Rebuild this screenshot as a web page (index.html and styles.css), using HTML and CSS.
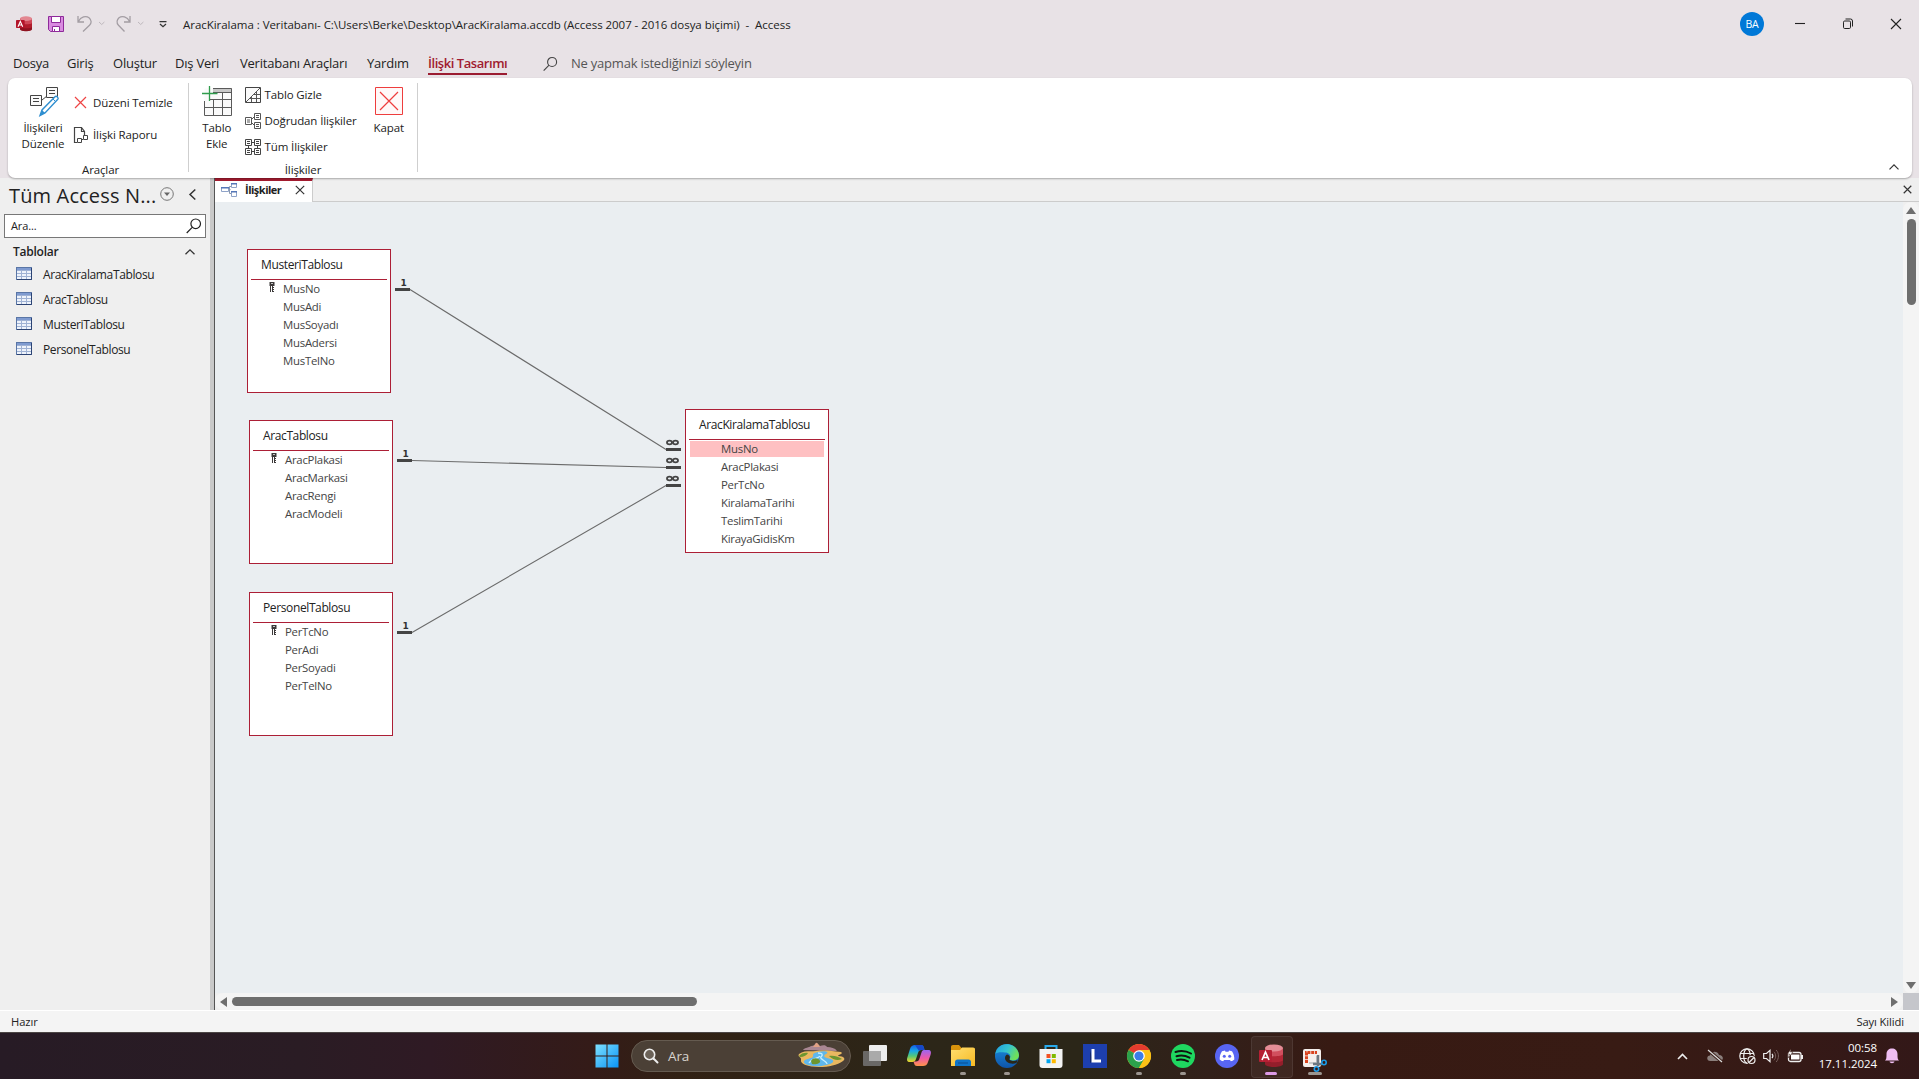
FILE: index.html
```html
<!DOCTYPE html>
<html lang="tr">
<head>
<meta charset="utf-8">
<title>AracKiralama - Access</title>
<link rel="stylesheet" href="styles.css">
</head>
<body>
<svg class="defs" width="0" height="0">
  <defs>
    <linearGradient id="win" x1="0" y1="0" x2="1" y2="1"><stop offset="0" stop-color="#7de0ff"/><stop offset="1" stop-color="#0a93f5"/></linearGradient>
    <linearGradient id="edgeA" x1="0" y1="0" x2="1" y2=".4"><stop offset="0" stop-color="#1f9fe0"/><stop offset=".55" stop-color="#35c3d0"/><stop offset="1" stop-color="#6fe05a"/></linearGradient>
    <linearGradient id="edgeB" x1="0" y1="0" x2="0" y2="1"><stop offset="0" stop-color="#1b8fe0"/><stop offset="1" stop-color="#0f55a8"/></linearGradient>
    <linearGradient id="copA" x1="0" y1="0" x2="0" y2="1"><stop offset="0" stop-color="#1560e8"/><stop offset=".35" stop-color="#18a8e8"/><stop offset=".65" stop-color="#52c878"/><stop offset="1" stop-color="#f3d428"/></linearGradient>
    <linearGradient id="copB" x1="0" y1="0" x2="0" y2="1"><stop offset="0" stop-color="#9a66f0"/><stop offset=".5" stop-color="#ee58a8"/><stop offset="1" stop-color="#ff9448"/></linearGradient>
    <linearGradient id="fold" x1="0" y1="0" x2="1" y2="1"><stop offset="0" stop-color="#ffdf70"/><stop offset="1" stop-color="#f7b923"/></linearGradient>
    <symbol id="grid" viewBox="0 0 16 13">
      <rect x=".5" y=".5" width="15" height="12" fill="#eef3fb" stroke="#5a76a6"/>
      <rect x="1" y="1" width="14" height="2" fill="#7f9bd0"/>
      <path d="M1 3.5h14M1 6.500h14M1 9.500h14M5.500 3v9M10.500 3v9" stroke="#9fb2d4" fill="none"/>
      <path d="M15.500 1v11.500H1" stroke="#2c4474" fill="none"/>
    </symbol>
    <symbol id="key" viewBox="0 0 6 11">
      <path d="M.5 0h5v4H4v1h1v1H4v1h1v1H4v1h1v1H3V4H2v6H1V4H.5zM2.300 1v1h1.400V1z" fill="#3d3a3a" fill-rule="evenodd"/>
    </symbol>
    <symbol id="access" viewBox="0 0 24 24">
      <path d="M6 4v16c0 4 18 4 18 0V4z" fill="#8f1220"/>
      <path d="M6 4v12c0 3 18 3 18 0V4z" fill="#b01c2c"/>
      <path d="M6 4v6c0 3 18 3 18 0V4z" fill="#cf4656"/>
      <ellipse cx="15" cy="4" rx="9" ry="3.500" fill="#e38791"/>
      <rect x="0" y="6" width="13" height="12" rx="1" fill="#b3152a"/>
      <path d="M3 16 6.500 8l3.500 8M4.300 13.500h4.400" stroke="#fff" stroke-width="1.700" fill="none"/>
    </symbol>
    <symbol id="lens" viewBox="0 0 16 16"><path d="M14.500 5.800a4.800 4.800 0 1 1-9.600 0 4.800 4.800 0 0 1 9.600 0zM6.200 9.400.7 15" fill="none" stroke="currentColor" stroke-width="1.200"/></symbol>
  </defs>
</svg>

<header class="titlebar">
  <svg class="tb-app" width="16" height="16"><use href="#access"/></svg>
  <svg class="tb-save" width="16" height="16" viewBox="0 0 16 16"><path d="M.5.5h15v15h-13l-2-2z" fill="#d98be0" stroke="#8e2a9a"/><path d="M3.500.500h9v6h-9zM4.500 10.500h7v5h-7z" fill="#fff" stroke="#8e2a9a"/><path d="M6.500 13v2" stroke="#8e2a9a"/></svg>
  <svg class="tb-undo" width="28" height="18" viewBox="0 0 28 18"><path d="M1 1v6h6M1.200 6.800C4 1.500 9 .500 12 2.800c3 2.500 2.500 5.500.500 7.500L6 16.500" fill="none" stroke="#a39da3" stroke-width="1.300"/><path d="m22 7 2.700 2.500L27.400 7" fill="none" stroke="#beb8bd"/></svg>
  <svg class="tb-redo" width="28" height="18" viewBox="0 0 28 18"><path d="M14 1v6H8M13.800 6.800C11 1.500 6 .500 3 2.800.500 5.300.500 8 2.500 10.300L8.500 16.500" fill="none" stroke="#a39da3" stroke-width="1.300"/><path d="m22 7 2.700 2.500L27.400 7" fill="none" stroke="#beb8bd"/></svg>
  <svg class="tb-more" width="8" height="7" viewBox="0 0 8 7"><path d="M.5.600h7M1 3l3 2.800L7 3" fill="none" stroke="#333" stroke-width="1.200"/></svg>
  <h1 class="tb-title">AracKiralama : Veritabanı- C:\Users\Berke\Desktop\AracKiralama.accdb (Access 2007 - 2016 dosya biçimi)&nbsp; -&nbsp; Access</h1>
  <div class="avatar">BA</div>
  <div class="win-buttons">
    <svg width="48" height="30" viewBox="0 0 48 30"><path d="M19 14.500h10" stroke="#222" stroke-width="1.100"/></svg>
    <svg width="48" height="30" viewBox="0 0 48 30"><rect x="19.500" y="12" width="7" height="7.500" rx="1.200" fill="none" stroke="#222"/><path d="M21.500 10h5a2 2 0 0 1 2 2v5.500" fill="none" stroke="#222"/></svg>
    <svg width="48" height="30" viewBox="0 0 48 30"><path d="m19 10 10 10M29 10 19 20" stroke="#222" stroke-width="1.100"/></svg>
  </div>
</header>

<nav class="menu">
  <span>Dosya</span><span>Giriş</span><span>Oluştur</span><span>Dış Veri</span><span>Veritabanı Araçları</span><span>Yardım</span>
  <span><b class="menu-active">İlişki Tasarımı</b></span>
  <span class="menu-lens"><svg width="15" height="16"><use href="#lens"/></svg></span>
  <span class="menu-ask">Ne yapmak istediğinizi söyleyin</span>
</nav>

<section class="ribbon">
  <div class="group tools">
    <div class="group-body">
      <div class="big">
        <svg width="32" height="32" viewBox="0 0 32 32"><path d="M1.500 10.500h11v10h-11zM17.500 2.500h11v10h-11z" fill="#fafafa" stroke="#444"/><path d="M4 13.500h6M4 16.500h6M20 5.500h6M20 8.500h6M13 15l5-4" stroke="#444" fill="none"/><path d="M26 11.800c1.500-1.500 4 1 2.800 2.500L16 28l-5 2.500 2-5.500z" fill="#fff" stroke="#2f8fd0" stroke-width="1.400"/><path d="m11 30.500 2-5.500 3 3z" fill="#2f8fd0"/><path d="m24 14 3 3" stroke="#2f8fd0"/></svg>
        <span>İlişkileri<br>Düzenle</span>
      </div>
      <div class="stack two">
        <div class="small"><svg width="16" height="16" viewBox="0 0 16 16"><path d="m2 2 11 11M13 2 2 13" stroke="#ee4444" stroke-width="1.200"/></svg><span>Düzeni Temizle</span></div>
        <div class="small"><svg width="16" height="18" viewBox="0 0 16 18"><path d="M4 16.500H1.500v-15h7l3 4v4M8.500 1.500v4h3" fill="none" stroke="#444" stroke-width="1.200"/><path d="M4.500 12.500h4v4h-4zM10.500 9.500h4v4h-4zM8.500 14.500l2-2" fill="none" stroke="#444"/></svg><span>İlişki Raporu</span></div>
      </div>
    </div>
    <div class="group-name">Araçlar</div>
  </div>
  <div class="group relations">
    <div class="group-body">
      <div class="big">
        <svg width="32" height="32" viewBox="0 0 32 32"><rect x="3.500" y="3.500" width="27" height="26" fill="#fafafa"/><path d="M12 3h19v4H12z" fill="#c8c8c8"/><path d="M12 3.500h18.500v27h-27V16M12 7.500h18M9 14.500h21M4 22.500h26M12.500 15v15M21.500 8v22" fill="none" stroke="#5a5a5a"/><path d="M8.500 1v15M1 8.500h15.500" stroke="#2f9c4c" stroke-width="1.300"/></svg>
        <span>Tablo<br>Ekle</span>
      </div>
      <div class="stack three">
        <div class="small"><svg width="16" height="16" viewBox="0 0 16 16"><path d="M.5.500h15v15H.500z" fill="#fafafa" stroke="#444"/><path d="M1 15 15 1M4 11.500h11M8 7.500h7M6.500 10v5M11.500 5v10" stroke="#555" fill="none"/></svg><span>Tablo Gizle</span></div>
        <div class="small"><svg width="16" height="16" viewBox="0 0 16 16"><path d="M.5 4.500h6v7h-6zM9.500.500h6v6h-6zM9.500 9.500h6v6h-6zM6.500 6.500 9 4M6.500 9.500 9 12M2 7h3M2 9h3M11 2.500h3M11 4.500h3M11 11.500h3M11 13.500h3" fill="none" stroke="#555"/></svg><span>Doğrudan İlişkiler</span></div>
        <div class="small"><svg width="16" height="16" viewBox="0 0 16 16"><path d="M.5.500h6v6h-6zM9.500.500h6v6h-6zM.5 9.500h6v6h-6zM9.500 9.500h6v6h-6zM6.500 3.500h3M6.500 12.500h3M3.500 6.500v3M12.500 6.500v3M2 2.500h3M2 4.500h3M11 2.500h3M11 4.500h3M2 11.500h3M2 13.500h3M11 11.500h3M11 13.500h3" fill="none" stroke="#444"/></svg><span>Tüm İlişkiler</span></div>
      </div>
      <div class="big close">
        <svg width="32" height="32" viewBox="0 0 32 32"><path d="M2.500 2.500h27v27h-27z" fill="#fff8f8" stroke="#ee3d3d"/><path d="m7 7 18 18M25 7 7 25" stroke="#ee3d3d" stroke-width="1.200"/></svg>
        <span>Kapat</span>
      </div>
    </div>
    <div class="group-name">İlişkiler</div>
  </div>
  <svg class="collapse" width="10" height="6" viewBox="0 0 10 6"><path d="m.5 5.300 4.500-4.500 4.500 4.500" fill="none" stroke="#333" stroke-width="1.200"/></svg>
</section>

<main class="work">
  <aside class="pane">
    <div class="pane-head">
      <h2>Tüm Access N...</h2>
      <svg width="14" height="14" viewBox="0 0 14 14"><circle cx="7" cy="7" r="6.300" fill="none" stroke="#777"/><path d="M4 5.500h6L7 9z" fill="#666"/></svg>
      <svg class="chev" width="7" height="11" viewBox="0 0 7 11"><path d="M6.300.500 1 5.500l5.300 5" fill="none" stroke="#333" stroke-width="1.500"/></svg>
    </div>
    <div class="pane-search"><span>Ara...</span><svg width="16" height="16"><use href="#lens"/></svg></div>
    <div class="pane-cat"><b>Tablolar</b><svg width="10" height="6" viewBox="0 0 10 6"><path d="m.5 5.300 4.500-4.500 4.500 4.500" fill="none" stroke="#333" stroke-width="1.300"/></svg></div>
    <ul>
      <li><svg width="16" height="13"><use href="#grid"/></svg>AracKiralamaTablosu</li>
      <li><svg width="16" height="13"><use href="#grid"/></svg>AracTablosu</li>
      <li><svg width="16" height="13"><use href="#grid"/></svg>MusteriTablosu</li>
      <li><svg width="16" height="13"><use href="#grid"/></svg>PersonelTablosu</li>
    </ul>
  </aside>
  <section class="doc">
    <div class="doc-tabs">
      <div class="doc-tab">
        <svg width="16" height="14" viewBox="0 0 16 14"><path d="M.5 4.500h7v4h-7zM10.500.500h5v4h-5zM10.500 8.500h5v5h-5z" fill="#fff" stroke="#8fa3c8"/><path d="M0 4h8v1.500H0zM10 0h6v1.500h-6zM10 8h6v1.500h-6z" fill="#5577b8"/><path d="M8 6.500h1.500M10 3.500H8.500v7H10" stroke="#8a97ad" fill="none"/></svg>
        <b>İlişkiler</b>
        <svg width="10" height="10" viewBox="0 0 10 10"><path d="m.8.800 8.400 8.400M9.200.800.8 9.200" stroke="#333" stroke-width="1.200"/></svg>
      </div>
      <svg class="doc-close" width="9" height="9" viewBox="0 0 10 10"><path d="m.8.800 8.400 8.400M9.200.800.8 9.200" stroke="#333" stroke-width="1.300"/></svg>
    </div>
    <div class="doc-body">
      <div class="canvas">
        <svg class="links" width="700" height="500" viewBox="0 0 700 500">
          <g stroke="#6b6b6b" stroke-width="1.100" fill="none"><path d="M195 87.500 451 247.500M197 258.500 451 265.500M197 430.500 451 283.500"/></g>
          <g stroke="#444" stroke-width="3"><path d="M180 87.500h15M182 258.500h15M182 430.500h15M451 247.500h15M451 265.500h15M451 283.500h15"/></g>
          <g fill="none" stroke="#444" stroke-width="1.800"><g id="inf"><ellipse cx="454.500" cy="240.500" rx="2.500" ry="1.900"/><ellipse cx="460.500" cy="240.500" rx="2.500" ry="1.900"/></g><use href="#inf" y="18"/><use href="#inf" y="36"/></g>
          <g class="one"><text x="185.500" y="84">1</text><text x="187.500" y="255">1</text><text x="187.500" y="427">1</text></g>
        </svg>
        <article class="table t-musteri"><h3>MusteriTablosu</h3><ul><li><svg width="6" height="11"><use href="#key"/></svg>MusNo</li><li>MusAdi</li><li>MusSoyadı</li><li>MusAdersi</li><li>MusTelNo</li></ul></article>
        <article class="table t-arac"><h3>AracTablosu</h3><ul><li><svg width="6" height="11"><use href="#key"/></svg>AracPlakasi</li><li>AracMarkasi</li><li>AracRengi</li><li>AracModeli</li></ul></article>
        <article class="table t-personel"><h3>PersonelTablosu</h3><ul><li><svg width="6" height="11"><use href="#key"/></svg>PerTcNo</li><li>PerAdi</li><li>PerSoyadi</li><li>PerTelNo</li></ul></article>
        <article class="table t-kiralama"><h3>AracKiralamaTablosu</h3><ul><li class="sel">MusNo</li><li>AracPlakasi</li><li>PerTcNo</li><li>KiralamaTarihi</li><li>TeslimTarihi</li><li>KirayaGidisKm</li></ul></article>
      </div>
      <div class="vbar"><i class="up"></i><i class="vthumb"></i><i class="down"></i></div>
      <div class="hbar"><i class="left"></i><i class="hthumb"></i><i class="right"></i></div>
      <div class="corner"></div>
    </div>
  </section>
</main>

<footer class="status"><span>Hazır</span><span>Sayı Kilidi</span></footer>

<div class="taskbar">
  <div class="apps">
    <div class="app"><svg width="24" height="24" viewBox="0 0 24 24"><path d="M.5.500h11v11H.500zM12.500.500h11v11h-11zM.500 12.500h11v11H.500zM12.500 12.500h11v11h-11z" fill="url(#win)"/></svg></div>
    <div class="find">
      <svg width="16" height="16" viewBox="0 0 16 16"><circle cx="6.500" cy="6.500" r="5.200" fill="#6b6258" stroke="#eee" stroke-width="1.600"/><path d="m10.500 10.500 4 4" stroke="#eee" stroke-width="2" stroke-linecap="round"/></svg>
      <span>Ara</span>
      <svg class="river" width="48" height="26" viewBox="0 0 48 26"><path d="M6 7c2-3 6-2 8-4 3 0 4-2 5-3 2 0 2 2 4 3 3-1 6-1 7 1 4 0 8 1 10 4z" fill="#a98793"/><path d="M15 4c2 0 3-3 4-4s3 2 4 4z" fill="#e0a184"/><path d="M2 11c5-4 12-2 17-3 8-1 16 0 25 1 3 2-2 2-3 4 6 0 8 3 5 5-6 4-14 6-24 6-11 0-19-3-18-7 1-3-4-3-2-6z" fill="#e9b860"/><path d="M21 9c7-2 12 0 8 2s-1 4 5 5c5 2 1 5-5 6-10 3-24 0-22-4 2-3 9-2 9-5 0-2 0-3 5-4z" fill="#5fb7ec"/><path d="M21 10c5 0 5 2 3 4s6 4 6 7M12 20c3-5 9-4 11-7" fill="none" stroke="#c7efff" stroke-width="1.300"/><path d="M14 18c2-4 8-3 9 0 1 2-4 4-8 3zM2 13c2-3 7-4 9-3-1 2-4 4-8 4zM32 13c5-1 10 1 13 3-4 2-9 1-13-3z" fill="#6d9630"/></svg>
    </div>
    <div class="app"><svg width="24" height="24" viewBox="0 0 24 24"><rect x="6" y="1" width="18" height="16" rx="1" fill="#eee"/><rect x="0" y="7" width="18" height="15" rx="1" fill="#777" opacity=".82"/><path d="M6 7h12v10H6z" fill="#aaa"/></svg></div>
    <div class="app"><svg width="24" height="24" viewBox="0 0 24 24"><path d="M8 1h6c2 0 2.500 1 3 3l.5 2h-3c-2 0-3 1-3.500 3l-2 6c-.600 2-1.500 3-3.500 3H3c-3 0-3.500-2-2.500-5l2.500-8C4 2 5.500 1 8 1z" fill="url(#copA)"/><path d="M16 22h-6c-2 0-2.500-1-3-3l-.5-1.500H9c2 0 3-1 3.500-3l2-6C15 6.500 16 6 18 6h3c3 0 3.500 2 2.500 5L21 18c-1 3-2.500 4-5 4z" fill="url(#copB)"/><path d="M8 1h6c2 0 2.500 1 3 3l.5 2h-3c-1.500 0-2 .300-2.500 1z" fill="#1748c8"/></svg></div>
    <div class="app run"><svg width="24" height="24" viewBox="0 0 24 24"><path d="M0 3c0-1.300.7-2 2-2h6l2.500 3H22c1.300 0 2 .700 2 2v4H0z" fill="#d8930c"/><path d="M0 6h9l2-2.500h11c1.300 0 2 .700 2 2V22H0z" fill="url(#fold)"/><path d="M4 22v-4c0-1.500 1-2.500 2.500-2.500h11c1.500 0 2.500 1 2.500 2.500v4z" fill="#0e74c8"/><path d="M7 19h10" stroke="#0a4c90"/></svg></div>
    <div class="app run"><svg width="24" height="24" viewBox="0 0 24 24"><circle cx="12" cy="12" r="12" fill="url(#edgeB)"/><path d="M.3 10C2-3 22-3 24 11c0 4-3 5.500-6 5.500-2.500 0-4-.800-3.300-2 2-3-.700-6-4.700-6C5 8 1.500 8.500.300 10z" fill="url(#edgeA)"/><path d="M14.700 14.500c-.800 1.400 1 2.500 3.800 2.500 1.700 0 3-.500 4.200-1.300L21.500 19c-6 2-11.500-1-11.500-5 0-2 1-3 2-3.500 2 .500 3.500 2 2.700 4z" fill="#2b2718"/></svg></div>
    <div class="app"><svg width="24" height="24" viewBox="0 0 24 24"><path d="M6.500 6V2h11v4" fill="none" stroke="#28a9ea" stroke-width="2"/><path d="M.5 5h23v16c0 2-1 3-3 3h-17c-2 0-3-1-3-3z" fill="#f3f3f3"/><path d="M7.500 10h4v4h-4z" fill="#f25022"/><path d="M12.800 10h4v4h-4z" fill="#7fba00"/><path d="M7.500 15.200h4v4h-4z" fill="#00a4ef"/><path d="M12.800 15.200h4v4h-4z" fill="#ffb900"/></svg></div>
    <div class="app"><svg width="24" height="24" viewBox="0 0 24 24"><path d="M0 0h24v24H0z" fill="#1d3fae"/><path d="M7 19V6l3 11z" fill="#12286e"/><path d="M10 5v12h8" fill="none" stroke="#fff" stroke-width="3"/></svg></div>
    <div class="app run"><svg width="24" height="24" viewBox="0 0 24 24"><circle cx="12" cy="12" r="12" fill="#fbc116"/><path d="M12 12 1.600 6A12 12 0 0 1 22.400 6z" fill="#e33b2e"/><path d="M1.600 6A12 12 0 0 0 12 24l5.200-9L12 12z" fill="#2ba24c"/><path d="M12 6h10.400A12 12 0 0 1 12 24l5.200-9z" fill="#fbc116"/><circle cx="12" cy="12" r="5.800" fill="#fff"/><circle cx="12" cy="12" r="4.600" fill="#3b7de8"/></svg></div>
    <div class="app run"><svg width="24" height="24" viewBox="0 0 24 24"><circle cx="12" cy="12" r="12" fill="#1fd760"/><path d="M4.500 8c5-1.600 11-1 15.500 1.500M5.500 12.300c4.500-1.300 9-.700 13 1.400M6 16c4-1 7.500-.500 11 1.300" fill="none" stroke="#101510" stroke-width="2" stroke-linecap="round"/></svg></div>
    <div class="app"><svg width="24" height="24" viewBox="0 0 24 24"><circle cx="12" cy="12" r="12" fill="#5865f2"/><path d="M7 7.300 10 6.500l.5 1.200h3L14 6.500l3 .8c1.700 2.700 2.500 5.500 2.300 8.200-1 1-2.300 1.600-3.500 1.800l-.8-1.300H9l-.8 1.300c-1.200-.200-2.500-.800-3.500-1.800C4.500 12.800 5.300 10 7 7.300z" fill="#fff"/><circle cx="9.300" cy="12.200" r="1.500" fill="#5865f2"/><circle cx="14.700" cy="12.200" r="1.500" fill="#5865f2"/></svg></div>
    <div class="app run active"><svg width="24" height="24"><use href="#access"/></svg></div>
    <div class="app run wide"><svg width="24" height="26" viewBox="0 0 24 26"><rect x="0" y="6" width="18" height="18" rx="2" fill="#f4efec"/><path d="M3.500 20V9.500H14" fill="none" stroke="#d9431e" stroke-width="3" stroke-dasharray="3 .8"/><path d="M6 20h8v-7" fill="none" stroke="#c8c8c8" stroke-width="2"/><path d="M15 12v11M10 21h9" stroke="#6d7780" stroke-width="2.500"/><circle cx="21" cy="19.500" r="2.200" fill="none" stroke="#1a9be8" stroke-width="1.600"/><circle cx="13.500" cy="26" r="2.200" fill="none" stroke="#1a9be8" stroke-width="1.600"/></svg></div>
  </div>
  <div class="tray">
    <svg class="tr-up" width="11" height="7" viewBox="0 0 11 7"><path d="m1 6 4.500-4.500L10 6" fill="none" stroke="#eee" stroke-width="1.600"/></svg>
    <svg class="tr-cloud" width="16" height="14" viewBox="0 0 16 14"><path d="M3.500 12C-1 12-.5 6.500 3 6.500 4 2 10.500 1.500 12 6c5 0 5 6 1 6z" fill="#8b7f7c"/><path d="m1 1 14 12" stroke="#3a1c16" stroke-width="3"/><path d="m1 1 14 12" stroke="#ddd" stroke-width="1.200"/></svg>
    <svg class="tr-net" width="17" height="17" viewBox="0 0 17 17"><g fill="none" stroke="#eee" stroke-width="1.200"><circle cx="8" cy="8" r="7.200"/><ellipse cx="8" cy="8" rx="3.300" ry="7.200"/><path d="M1 5.500h14M1 10.500h14"/></g><circle cx="12.500" cy="12" r="5" fill="#3a1c16"/><circle cx="12.500" cy="12" r="3.500" fill="none" stroke="#eee" stroke-width="1.200"/><path d="m10 14.500 5-5" stroke="#eee" stroke-width="1.200"/></svg>
    <svg class="tr-vol" width="16" height="14" viewBox="0 0 16 14"><path d="M.7 4.500h2.800L7 1.300v11.400L3.500 9.500H.700z" fill="none" stroke="#eee" stroke-width="1.200"/><path d="M9 4.800c1 1.200 1 3.200 0 4.400" fill="none" stroke="#eee" stroke-width="1.100"/><path d="M11 2.800c2.200 2.500 2.200 6 0 8.500M13.200 1c3 3.500 3 8.500 0 12" fill="none" stroke="#76605b"/></svg>
    <svg class="tr-bat" width="17" height="14" viewBox="0 0 17 14"><rect x="1.500" y="3.500" width="12.500" height="9" rx="2" fill="none" stroke="#eee" stroke-width="1.300"/><path d="M4 5.500h8.500v5H4z" fill="#fff"/><path d="M15 6v4" stroke="#eee" stroke-width="2"/><path d="M4 0 .5 5h2L1 9l5-6H3.500z" fill="#fff" stroke="#3a1c16" stroke-width=".5"/></svg>
    <div class="clock">00:58<br>17.11.2024</div>
    <svg class="tr-bell" width="14" height="16" viewBox="0 0 14 16"><path d="M0 12.500c1.500-1 1.500-3 1.500-6.500C1.500 2.500 4 .500 7 .500S12.500 2.500 12.500 6c0 3.500 0 5.500 1.500 6.500zM4.500 13.500h5c-.500 2.300-4.500 2.300-5 0z" fill="#efbdf2"/></svg>
  </div>
</div>
</body>
</html>
```
FILE: styles.css
```css
* { box-sizing: border-box; }
body {
  margin: 0; width: 1919px; height: 1079px; overflow: hidden;
  display: flex; flex-direction: column;
  font: 11.5px/16px "Open Sans", "Noto Sans", sans-serif;
  color: #222; letter-spacing: -0.1px;
  background: #e8e2e6;
}
svg { display: block; flex: none; overflow: visible; }
h1, h2, h3, ul { margin: 0; padding: 0; font-weight: 400; list-style: none; }
.defs { position: absolute; }

/* title bar */
.titlebar { height: 48px; flex: none; display: flex; align-items: center; padding-left: 16px; }
.tb-save { margin-left: 16px; }
.tb-undo { margin-left: 13px; }
.tb-redo { margin-left: 11px; }
.tb-more { margin-left: 15px; }
.tb-title { margin-left: 16px; font-size: 11.5px; letter-spacing: -.04px; white-space: nowrap; padding-top: 1px; }
.avatar {
  margin-left: auto; width: 24px; height: 24px; border-radius: 50%;
  background: #0078d7; color: #fff; text-align: center; line-height: 24px; font-size: 10.5px;
}
.win-buttons { display: flex; margin: 0 0 0 12px; width: 143px; }

/* menu */
.menu {
  height: 30px; flex: none; padding-left: 13px; display: grid;
  grid-template-columns: 54px 46px 62px 65px 127px 61px 115px 28px 300px;
  font-size: 13px; letter-spacing: -0.22px; white-space: nowrap; line-height: 30px;
}
.menu-active { display: inline-block; height: 27px; font-weight: 600; letter-spacing: -.45px; color: #a01c30; border-bottom: 2px solid #9b1c31; line-height: 30px; }
.menu-lens { padding-top: 8px; color: #444; }
.menu-ask { color: #555; }

/* ribbon */
.ribbon {
  height: 100px; flex: none; margin: 0 7px 0 8px; display: flex; position: relative; z-index: 2;
  background: #fff; border-radius: 7px; box-shadow: 0 1px 2px rgba(0,0,0,.3); letter-spacing: -.12px;
}
.group { margin: 5px 0 6px; border-right: 1px solid #cfcfcf; display: flex; flex-direction: column; }
.tools { width: 181px; }
.relations { width: 229px; }
.group-body { height: 78px; flex: none; display: flex; }
.group-name { text-align: center; line-height: 18px; height: 11px; }
.tools .group-name { padding-left: 5px; }
.big { display: flex; flex-direction: column; align-items: center; text-align: center; padding-top: 2px; white-space: nowrap; }
.big span { padding-top: 3px; }
.tools .big { width: 62px; padding-left: 8px; }
.tools .big svg { margin-left: 3px; }
.relations .big { width: 56px; }
.relations .big.close { width: 57px; margin-left: 8px; }
.small { display: flex; align-items: center; gap: 4px; height: 26px; white-space: nowrap; }
.two { padding: 4px 0 0 4px; }
.two .small { height: 32px; gap: 3px; }
.two .small svg { margin-left: -1px; margin-right: 1px; }
.three { width: 108px; margin-top: -1px; }
.collapse { position: absolute; right: 13px; bottom: 8px; }

/* navigation pane */
.work { height: 832px; flex: none; display: flex; background: #efefef; }
.pane { width: 214px; border-right: 4px solid #c9c9c9; }
.pane-head { height: 36px; display: flex; align-items: center; padding: 0 0 4px 9px; }
.pane-head h2 { font-size: 20px; width: 151px; line-height: 32px; letter-spacing: .15px; white-space: nowrap; padding-top: 3px; }
.chev { margin-left: 15px; }
.pane-search { margin-left: 4px; width: 202px; height: 24px; border: 1px solid #777; background: #fff; display: flex; align-items: center; justify-content: space-between; padding: 0 3px 0 6px; font-size: 11px; }
.pane-cat { display: flex; justify-content: space-between; align-items: center; height: 27px; padding: 0 15px 0 13px; }
.pane-cat b { font-weight: 600; font-size: 12px; letter-spacing: -.25px; }
.pane ul { margin-top: -3px; }
.pane li { display: flex; align-items: center; height: 25px; gap: 11px; padding-left: 16px; font-size: 12px; letter-spacing: -.37px; }
.pane li svg { margin-top: -3px; }

/* document */
.doc { flex: 1; border-left: 1px solid #555; display: flex; flex-direction: column; }
.doc-tabs { height: 24px; display: flex; justify-content: space-between; align-items: center; border-bottom: 1px solid #ccc; flex: none; padding-right: 7px; }
.doc-tab { width: 98px; height: 24px; background: #fff; border-top: 3px solid #a51c30; border-right: 1px solid #ccc; display: flex; align-items: center; padding: 0 0 3px 6px; margin-bottom: -1px; }
.doc-tab b { width: 58px; padding-left: 8px; font-weight: 700; font-size: 11px; letter-spacing: -.5px; }
.doc-body { flex: 1; display: grid; grid-template: 791px 17px / 1fr 16px; }
.canvas { background: #eaeef1; position: relative; }
.links { position: absolute; left: 0; top: 0; }
.one text { font: 700 9px "DejaVu Sans", sans-serif; fill: #333; }
.table { position: absolute; width: 144px; height: 144px; border: 1px solid #ac1f36; background: #fff; }
.table h3 { height: 30px; margin: 0 3px 0 3px; padding-left: 10px; border-bottom: 1px solid #ac1f36; font-size: 12px; line-height: 29px; letter-spacing: -.38px; white-space: nowrap; }
.table ul { padding-top: 1px; }
.table li { height: 16px; margin: 0 4px 2px; padding-left: 31px; line-height: 15px; color: #444; font-size: 11.4px; letter-spacing: -.26px; white-space: nowrap; position: relative; }
.table li svg { position: absolute; left: 17px; top: 1px; }
.table .sel { background: #fec0c2; }
.t-musteri { left: 32px; top: 47px; }
.t-arac { left: 34px; top: 218px; }
.t-personel { left: 34px; top: 390px; }
.t-kiralama { left: 470px; top: 207px; }
.vbar { background: #f4f4f4; border-radius: 8px; display: flex; flex-direction: column; align-items: center; padding: 5px 0; }
.vthumb { width: 9px; height: 86px; border-radius: 5px; background: #6e6e6e; margin: 5px 0 auto 0; }
.hbar { background: #f4f4f4; border-radius: 8px; display: flex; align-items: center; padding: 0 5px; }
.hthumb { width: 465px; height: 9px; border-radius: 5px; background: #6e6e6e; margin: 0 auto 0 5px; }
.up, .down { border: 5px solid transparent; border-top: 0; border-bottom: 7px solid #6e6e6e; }
.down { transform: rotate(180deg); margin-bottom: -1px; }
.left, .right { border: 5px solid transparent; border-left: 0; border-right: 7px solid #6e6e6e; }
.right { transform: rotate(180deg); }
.corner { background: #c5c6cb; }

.status { height: 22px; flex: none; background: #f4f4f4; border-top: 1px solid #fff; display: flex; justify-content: space-between; padding: 0 15px 0 11px; font-size: 11.200px; line-height: 21px; }

/* taskbar */
.taskbar {
  flex: 1; display: flex; border-top: 1px solid #4b4544;
  background: linear-gradient(90deg, #271b25 0, #2a1c24 300px, #2f1a24 430px, #341b18 590px, #312114 680px, #2c2618 920px, #2b2618 1080px, #32201a 1210px, #371a13 1330px, #381b14 1620px, #331818 100%);
}
.apps { display: flex; margin-left: 585px; align-items: center; height: 46px; }
.app { width: 44px; height: 46px; display: flex; align-items: center; justify-content: center; position: relative; }
.app svg { margin-top: -1px; }
.app.run::after { content: ""; position: absolute; bottom: 4px; left: 19px; width: 6px; height: 3px; border-radius: 2px; background: #9c958f; }
.app.active::before { content: ""; position: absolute; left: 2px; top: 3px; width: 40px; height: 40px; border-radius: 4px; background: rgba(255,255,255,.05); border: 1px solid rgba(255,255,255,.08); }
.app.active::after { left: 16px; width: 12px; background: #dd9ae6; }
.app.wide::after { left: 15px; width: 14px; }
.find { width: 220px; height: 32px; margin: 0 2px; border: 1px solid #655b50; border-radius: 16px; background: #4b4036; display: flex; align-items: center; padding: 0 5px 0 11px; color: #d8d4d0; font-size: 13.500px; }
.find span { margin-left: 9px; }
.river { margin-left: auto; }
.tray { flex: 1; display: flex; align-items: center; height: 46px; color: #fff; }
.tr-up { margin-left: 340px; }
.tr-cloud { margin-left: 19px; }
.tr-net { margin-left: 16px; }
.tr-vol { margin-left: 7px; }
.tr-bat { margin-left: 8px; }
.clock { margin-left: auto; text-align: right; font-size: 11.500px; letter-spacing: -.05px; }
.tr-bell { margin: 0 20px 0 8px; }
```
